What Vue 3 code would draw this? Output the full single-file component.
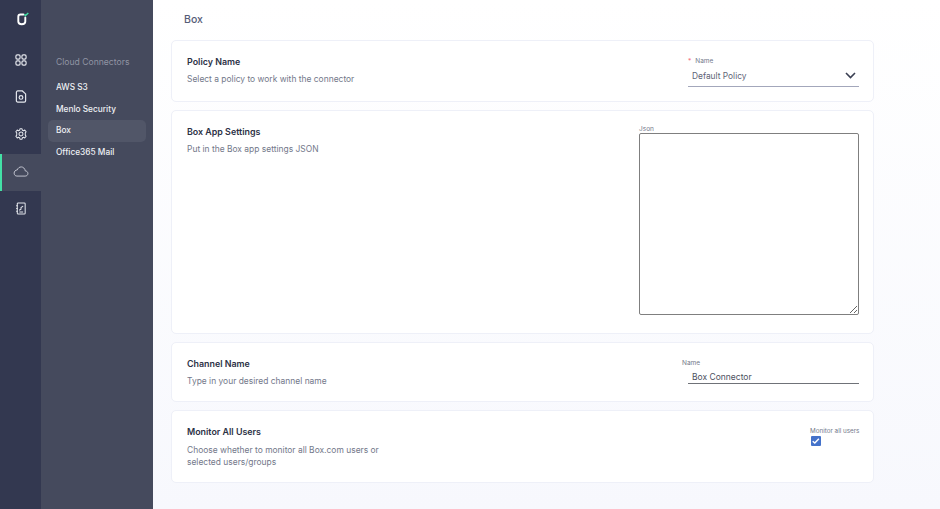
<script setup>
const menu = [
  { label: 'AWS S3' },
  { label: 'Menlo Security' },
  { label: 'Box', active: true },
  { label: 'Office365 Mail' },
]
</script>

<template>
  <div class="app">
    <nav class="rail">
      <div class="logo">
        <svg width="16" height="16" viewBox="0 0 16 16" fill="none">
          <path d="M9.5 3.5H6.5C5.2 3.5 4.3 4.4 4.3 5.7V10.5C4.3 12.3 5.6 13.2 7.8 13.2C10 13.2 11.3 12.3 11.3 10.5V6.5" stroke="#fff" stroke-width="1.9" stroke-linecap="round"/>
          <path d="M10.3 3.4L11.5 4.5L14.3 2" stroke="#43dfa5" stroke-width="1.5"/>
        </svg>
      </div>
      <div class="rail-item">
        <svg width="12" height="12" viewBox="0 0 13 13" fill="none" stroke="#e4e6ec" stroke-width="1.3">
          <rect x="1" y="1" width="4.5" height="4.5" rx="1.4"/><rect x="7.5" y="1" width="4.5" height="4.5" rx="1.4"/>
          <rect x="1" y="7.5" width="4.5" height="4.5" rx="1.4"/><rect x="7.5" y="7.5" width="4.5" height="4.5" rx="1.4"/>
        </svg>
      </div>
      <div class="rail-item">
        <svg width="12" height="13" viewBox="0 0 13 14" fill="none" stroke="#e4e6ec" stroke-width="1.3">
          <path d="M3 1H8L11.5 4.2V11.5C11.5 12.4 10.8 13 10 13H3C2.1 13 1.5 12.4 1.5 11.5V2.5C1.5 1.6 2.1 1 3 1Z"/>
          <circle cx="6.5" cy="8" r="2"/>
        </svg>
      </div>
      <div class="rail-item">
        <svg width="12" height="12" viewBox="0 0 14 14" fill="none" stroke="#e4e6ec" stroke-width="1.2">
          <path d="M5.8 1H8.2L8.6 2.6L10 3.2L11.4 2.4L13 4.4L12 5.7V8.3L13 9.6L11.4 11.6L10 10.8L8.6 11.4L8.2 13H5.8L5.4 11.4L4 10.8L2.6 11.6L1 9.6L2 8.3V5.7L1 4.4L2.6 2.4L4 3.2L5.4 2.6Z" stroke-linejoin="round"/>
          <circle cx="7" cy="7" r="2.3"/>
        </svg>
      </div>
      <div class="rail-item rail-active">
        <svg width="16" height="11" viewBox="0 0 17 12" fill="none" stroke="#c9ccd6" stroke-width="1">
          <path d="M4 11H13C14.8 11 16 9.8 16 8.2C16 6.6 14.8 5.4 13.2 5.4C12.8 2.8 10.9 1 8.8 1C6.8 1 5.2 2.2 4.5 4.2C2.4 4.4 1 6 1 7.8C1 9.6 2.3 11 4 11Z"/>
        </svg>
      </div>
      <div class="rail-item rail-last">
        <svg width="12" height="13" viewBox="0 0 12 14" fill="none" stroke="#e4e6ec" stroke-width="1.1">
          <rect x="2" y="1" width="8.5" height="12" rx="1"/>
          <path d="M4 8.8L6 7.8V6L8.3 4.5M4.2 10.8H8.3M0.8 4H2.5M0.8 7H2.5M0.8 10H2.5"/>
        </svg>
      </div>
    </nav>

    <aside class="side">
      <div class="side-title">Cloud Connectors</div>
      <div v-for="m in menu" :key="m.label" class="side-item" :class="{ on: m.active }">{{ m.label }}</div>
    </aside>

    <main class="main">
      <h1 class="page-title">Box</h1>

      <section class="card card-policy">
        <div class="text">
          <h2>Policy Name</h2>
          <p>Select a policy to work with the connector</p>
        </div>
        <div class="field">
          <div class="lab"><i class="req">*</i>Name</div>
          <div class="select">
            <span>Default Policy</span>
            <svg width="11" height="7" viewBox="0 0 11 7" fill="none" stroke="#3a3f52" stroke-width="1.6"><path d="M1 1L5.5 5.5L10 1"/></svg>
          </div>
        </div>
      </section>

      <section class="card card-json">
        <div class="text">
          <h2>Box App Settings</h2>
          <p>Put in the Box app settings JSON</p>
        </div>
        <div class="json">
          <div class="json-label">Json</div>
          <textarea class="area"></textarea>
        </div>
      </section>

      <section class="card card-channel">
        <div class="text">
          <h2>Channel Name</h2>
          <p>Type in your desired channel name</p>
        </div>
        <div class="field">
          <div class="lab lab-plain">Name</div>
          <div class="input">Box Connector</div>
        </div>
      </section>

      <section class="card card-monitor">
        <div class="text">
          <h2>Monitor All Users</h2>
          <p>Choose whether to monitor all Box.com users or<br />selected users/groups</p>
        </div>
        <div class="check-wrap">
          <div class="check-label">Monitor all users</div>
          <div class="check">
            <svg width="10" height="10" viewBox="0 0 10 10" fill="none" stroke="#fff" stroke-width="1.5"><path d="M1.8 5.2L4 7.2L8.3 2.6"/></svg>
          </div>
        </div>
      </section>
    </main>
  </div>
</template>

<style>
html, body { margin: 0; background: #f8f9fd; }
</style>

<style scoped>
.app {
  display: flex;
  width: 940px;
  height: 509px;
  overflow: hidden;
  font-family: Inter, "Liberation Sans", sans-serif;
}
.rail {
  width: 41px;
  flex: none;
  background: #333850;
  display: flex;
  flex-direction: column;
}
.logo { height: 43px; padding: 11px 0 0 14px; box-sizing: border-box; }
.logo svg { display: block; }
.rail-item {
  height: 37px;
  padding-bottom: 4px;
  display: flex;
  align-items: center;
  justify-content: center;
  box-sizing: border-box;
}
.rail-last { padding-bottom: 2px; }
.rail-active { background: #454a5d; border-left: 2px solid #43e0a6; padding: 0 2px 2px 0; }
.side {
  width: 112px;
  flex: none;
  background: #454a5d;
  padding: 53px 7px 0;
  box-sizing: border-box;
}
.side-title { font-size: 8.6px; line-height: 19px; color: #9094a3; padding-left: 8px; margin-bottom: 5px; }
.side-item {
  height: 21.5px;
  line-height: 21.5px;
  font-size: 8.3px;
  font-weight: 500;
  color: #eef0f4;
  padding-left: 8px;
  border-radius: 5px;
}
.side-item.on { background: #515668; }
.main {
  flex: 1;
  background: linear-gradient(#fff, #f7f8fd);
  padding: 0 66px 0 18px;
  box-sizing: border-box;
  display: flex;
  flex-direction: column;
  gap: 8px;
}
.page-title {
  margin: 0 0 0 13px;
  height: 32px;
  line-height: 39px;
  font-size: 10.5px;
  font-weight: 500;
  color: #565d78;
}
.card {
  background: #fff;
  border: 1px solid #eef0f8;
  border-radius: 5px;
  box-sizing: border-box;
  display: flex;
  justify-content: space-between;
  padding: 0 14px 0 15px;
}
.card-policy { height: 62px; }
.card-json { height: 224px; }
.card-channel { height: 60px; }
.card-monitor { height: 73px; }
.text { padding-top: 15px; }
h2 { margin: 0; font-size: 8.9px; line-height: 11px; font-weight: 600; color: #2c3145; }
p { margin: 6px 0 0; font-size: 8.45px; line-height: 12px; color: #73788a; }
.card-monitor p { margin-top: 7px; }
.field { width: 171px; padding-top: 16px; }
.lab { font-size: 6.5px; line-height: 9px; color: #73788a; }
.req { font-style: normal; color: #f4707e; margin-right: 4px; }
.select {
  height: 21px;
  border-bottom: 1px solid #a3a7bb;
  display: flex;
  align-items: center;
  justify-content: space-between;
  padding: 0 3px 0 4px;
  font-size: 8.4px;
  color: #5e6376;
  box-sizing: border-box;
}
.select svg { margin-bottom: 2px; }
.lab-plain { margin-left: -6px; }
.input {
  height: 16px;
  line-height: 18px;
  border-bottom: 1px solid #6f7278;
  padding-left: 4px;
  font-size: 8.5px;
  color: #4c5060;
  box-sizing: border-box;
}
.json { width: 220px; padding-top: 15px; }
.json-label { font-size: 6.5px; line-height: 7px; color: #73788a; }
.area {
  display: block;
  width: 220px;
  height: 182px;
  margin: 0;
  border: 1px solid #7f7f7f;
  border-radius: 2px;
  background: #fff;
  box-sizing: border-box;
  outline: none;
}
.check-wrap { padding-top: 16px; width: 49px; }
.check-label { font-size: 6.3px; line-height: 9px; color: #73788a; white-space: nowrap; }
.check {
  width: 9.5px;
  height: 9.5px;
  margin: 0 0 0 1px;
  background: #4472ca;
  border-radius: 1px;
  display: flex;
  align-items: center;
  justify-content: center;
}
</style>
